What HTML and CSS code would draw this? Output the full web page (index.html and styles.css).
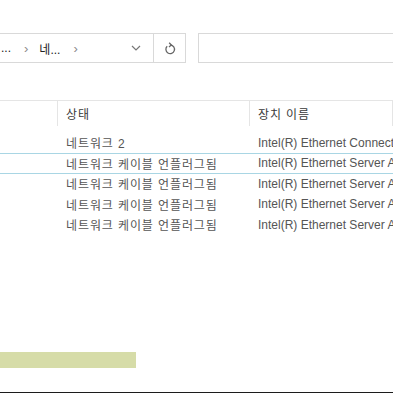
FILE: index.html
```html
<!DOCTYPE html>
<html lang="ko">
<head>
  <meta charset="UTF-8" />
  <title>네트워크 연결</title>
  <link rel="stylesheet" href="styles.css">
</head>
<body>
  <div class="window">
    <div class="toolbar">
      <div class="address">
        <div class="crumbs">
          <span class="crumb">...</span>
          <span class="sep">›</span>
          <span class="crumb">네...</span>
          <span class="sep">›</span>
        </div>
        <span class="drop">
          <svg width="10" height="6" viewBox="0 0 10 6"><path d="M1 1l4 4 4-4" fill="none" stroke="#777" stroke-width="1.2"/></svg>
        </span>
        <button class="refresh">
          <svg width="12" height="13" viewBox="0 0 12 13"><path d="M3.2 4.2A4.3 4.3 0 1 0 6.5 3" fill="none" stroke="#666" stroke-width="1.3"/><path d="M5.2 0.8L7.3 3 5 5" fill="none" stroke="#666" stroke-width="1.3"/></svg>
        </button>
      </div>
      <div class="search"></div>
    </div>

    <div class="list">
      <div class="list-header">
        <div class="col name"></div>
        <div class="col status">상태</div>
        <div class="col device">장치 이름</div>
      </div>
      <div id="rows"></div>
    </div>

    <div class="footer">
      <div class="progress"></div>
    </div>
  </div>

  <script>
    const rows = [
      { status: "네트워크 2", device: "Intel(R) Ethernet Connect" },
      { status: "네트워크 케이블 언플러그됨", device: "Intel(R) Ethernet Server A", hover: true },
      { status: "네트워크 케이블 언플러그됨", device: "Intel(R) Ethernet Server A" },
      { status: "네트워크 케이블 언플러그됨", device: "Intel(R) Ethernet Server A" },
      { status: "네트워크 케이블 언플러그됨", device: "Intel(R) Ethernet Server A" }
    ];

    const rowsEl = document.getElementById("rows");
    rows.forEach(r => {
      const row = document.createElement("div");
      row.className = "row" + (r.hover ? " hover" : "");
      row.innerHTML = `<div class="col name"></div><div class="col status">${r.status}</div><div class="col device">${r.device}</div>`;
      rowsEl.appendChild(row);
    });
  </script>
</body>
</html>
```

FILE: styles.css
```css
body {
  margin: 0;
  background: #fff;
  font-family: "Liberation Sans", "Noto Sans CJK KR", sans-serif;
  font-size: 12px;
  color: #555;
  overflow: hidden;
}

.window {
  height: 393px;
  display: flex;
  flex-direction: column;
  border-bottom: 1px solid #1c1c1c;
  box-sizing: border-box;
}

.toolbar {
  display: flex;
  gap: 12px;
  margin-top: 33px;
  height: 30px;
}

.address {
  display: flex;
  align-items: center;
  width: 187px;
  margin-left: -1px;
  border: 1px solid #d9d9d9;
  box-sizing: border-box;
}

.crumbs {
  flex: 1;
  display: flex;
  align-items: center;
  color: #222;
  white-space: nowrap;
}

.crumb:first-child {
  margin-left: 1px;
}

.sep {
  color: #8a8a8a;
  font-size: 13px;
  margin: 0 11px 0 13px;
}

.drop {
  width: 30px;
  display: flex;
  justify-content: center;
  margin-right: 2px;
}

.refresh {
  width: 32px;
  height: 100%;
  border: none;
  border-left: 1px solid #d9d9d9;
  background: none;
  display: flex;
  align-items: center;
  justify-content: center;
  padding: 0;
}

.search {
  flex: 1;
  border: 1px solid #d9d9d9;
  margin-right: -20px;
}

.list {
  margin-top: 37px;
  border-top: 1px solid #e5e5e5;
}

.list-header {
  display: flex;
  height: 25px;
  align-items: stretch;
  color: #3a3a3a;
}

.list-header .col {
  border-right: 1px solid #e5e5e5;
  display: flex;
  align-items: center;
}

.col {
  box-sizing: border-box;
  padding-left: 8px;
  white-space: nowrap;
  overflow: hidden;
}

.col.name {
  width: 58px;
  padding: 0;
}

.col.status {
  width: 192px;
  letter-spacing: 0.9px;
}

.col.device {
  flex: 1;
}

.list-header .col.device {
  letter-spacing: 0.9px;
}

#rows {
  margin-top: 6px;
}

.row {
  display: flex;
  box-sizing: border-box;
  height: 21.5px;
  align-items: center;
  border-top: 1px solid transparent;
  border-bottom: 1px solid transparent;
  margin-bottom: -1px;
}

.row.hover {
  border-color: #a9d6e4;
}

.footer {
  margin-top: auto;
  margin-bottom: 24px;
}

.progress {
  width: 136px;
  height: 16px;
  background: #d6dca8;
}
```
